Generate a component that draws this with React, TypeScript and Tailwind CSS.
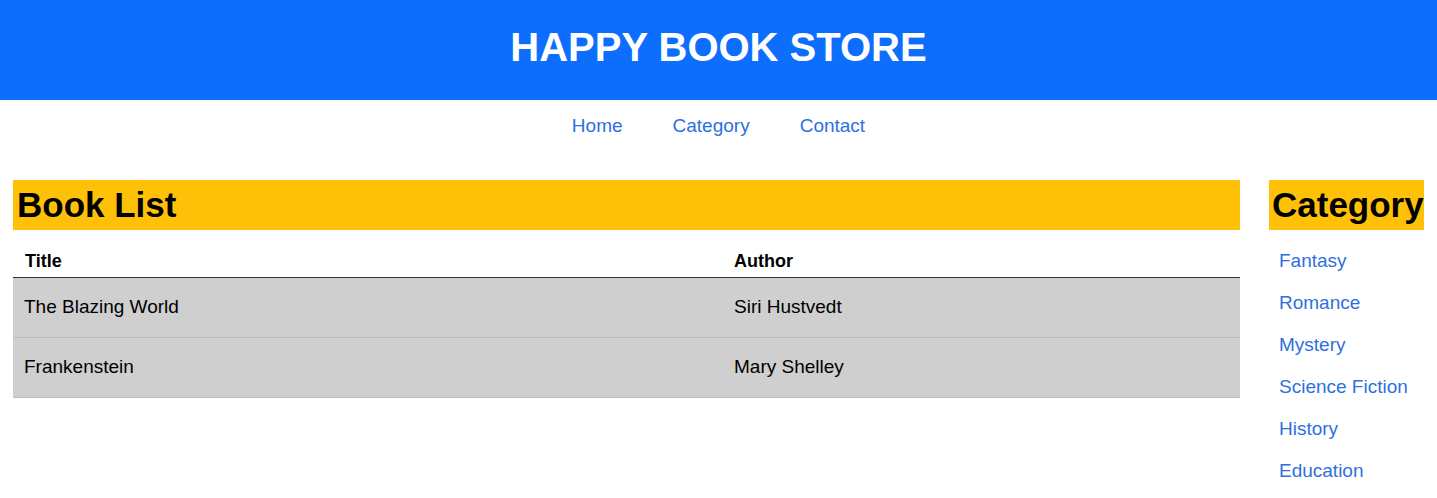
import React from 'react';

const BOOKS = [
  { title: 'The Blazing World', author: 'Siri Hustvedt' },
  { title: 'Frankenstein', author: 'Mary Shelley' },
];

const CATEGORIES = ['Fantasy', 'Romance', 'Mystery', 'Science Fiction', 'History', 'Education'];

const NAV = ['Home', 'Category', 'Contact'];

export default function App() {
  return (
    <div className="min-h-screen bg-white text-black font-['Liberation_Sans',Arial,sans-serif]">
      <header className="h-[100px] bg-[#0d6efd] flex items-center justify-center">
        <h1 className="text-[40px] leading-[48px] font-bold text-white -mt-[6px]">HAPPY BOOK STORE</h1>
      </header>

      <nav className="h-[50px] pt-[2px] flex items-center justify-center">
        {NAV.map((item) => (
          <a key={item} href="#" className="px-[25px] text-[19px] leading-[22px] text-[#2f6fdf]">
            {item}
          </a>
        ))}
      </nav>

      <div className="flex gap-[29px] px-[13px] pt-[30px]">
        <main className="flex-1">
          <h2 className="h-[50px] bg-[#ffc107] px-[4px] text-[35px] leading-[50px] font-bold">Book List</h2>
          <table className="w-full mt-[13px] border-collapse text-left">
            <thead>
              <tr className="border-b border-[#333]">
                <th className="w-[710px] px-[12px] pt-[7px] pb-[5px] text-[18px] leading-[22px] font-bold">Title</th>
                <th className="px-[11px] pt-[7px] pb-[5px] text-[18px] leading-[22px] font-bold">Author</th>
              </tr>
            </thead>
            <tbody>
              {BOOKS.map((b) => (
                <tr key={b.title} className="bg-[#cfcfcf] border-b border-[#bdbdbd]">
                  <td className="px-[11px] pt-[17px] pb-[19px] text-[19px] leading-[23px]">{b.title}</td>
                  <td className="px-[11px] pt-[17px] pb-[19px] text-[19px] leading-[23px]">{b.author}</td>
                </tr>
              ))}
            </tbody>
          </table>
        </main>

        <aside className="w-[155px]">
          <h2 className="h-[50px] bg-[#ffc107] px-[3px] text-[35px] leading-[50px] font-bold whitespace-nowrap">Category</h2>
          <ul className="mt-[20px] pl-[10px]">
            {CATEGORIES.map((c) => (
              <li key={c} className="h-[42px] text-[19px] leading-[22px]">
                <a href="#" className="text-[#2f6fdf] whitespace-nowrap">{c}</a>
              </li>
            ))}
          </ul>
        </aside>
      </div>
    </div>
  );
}
